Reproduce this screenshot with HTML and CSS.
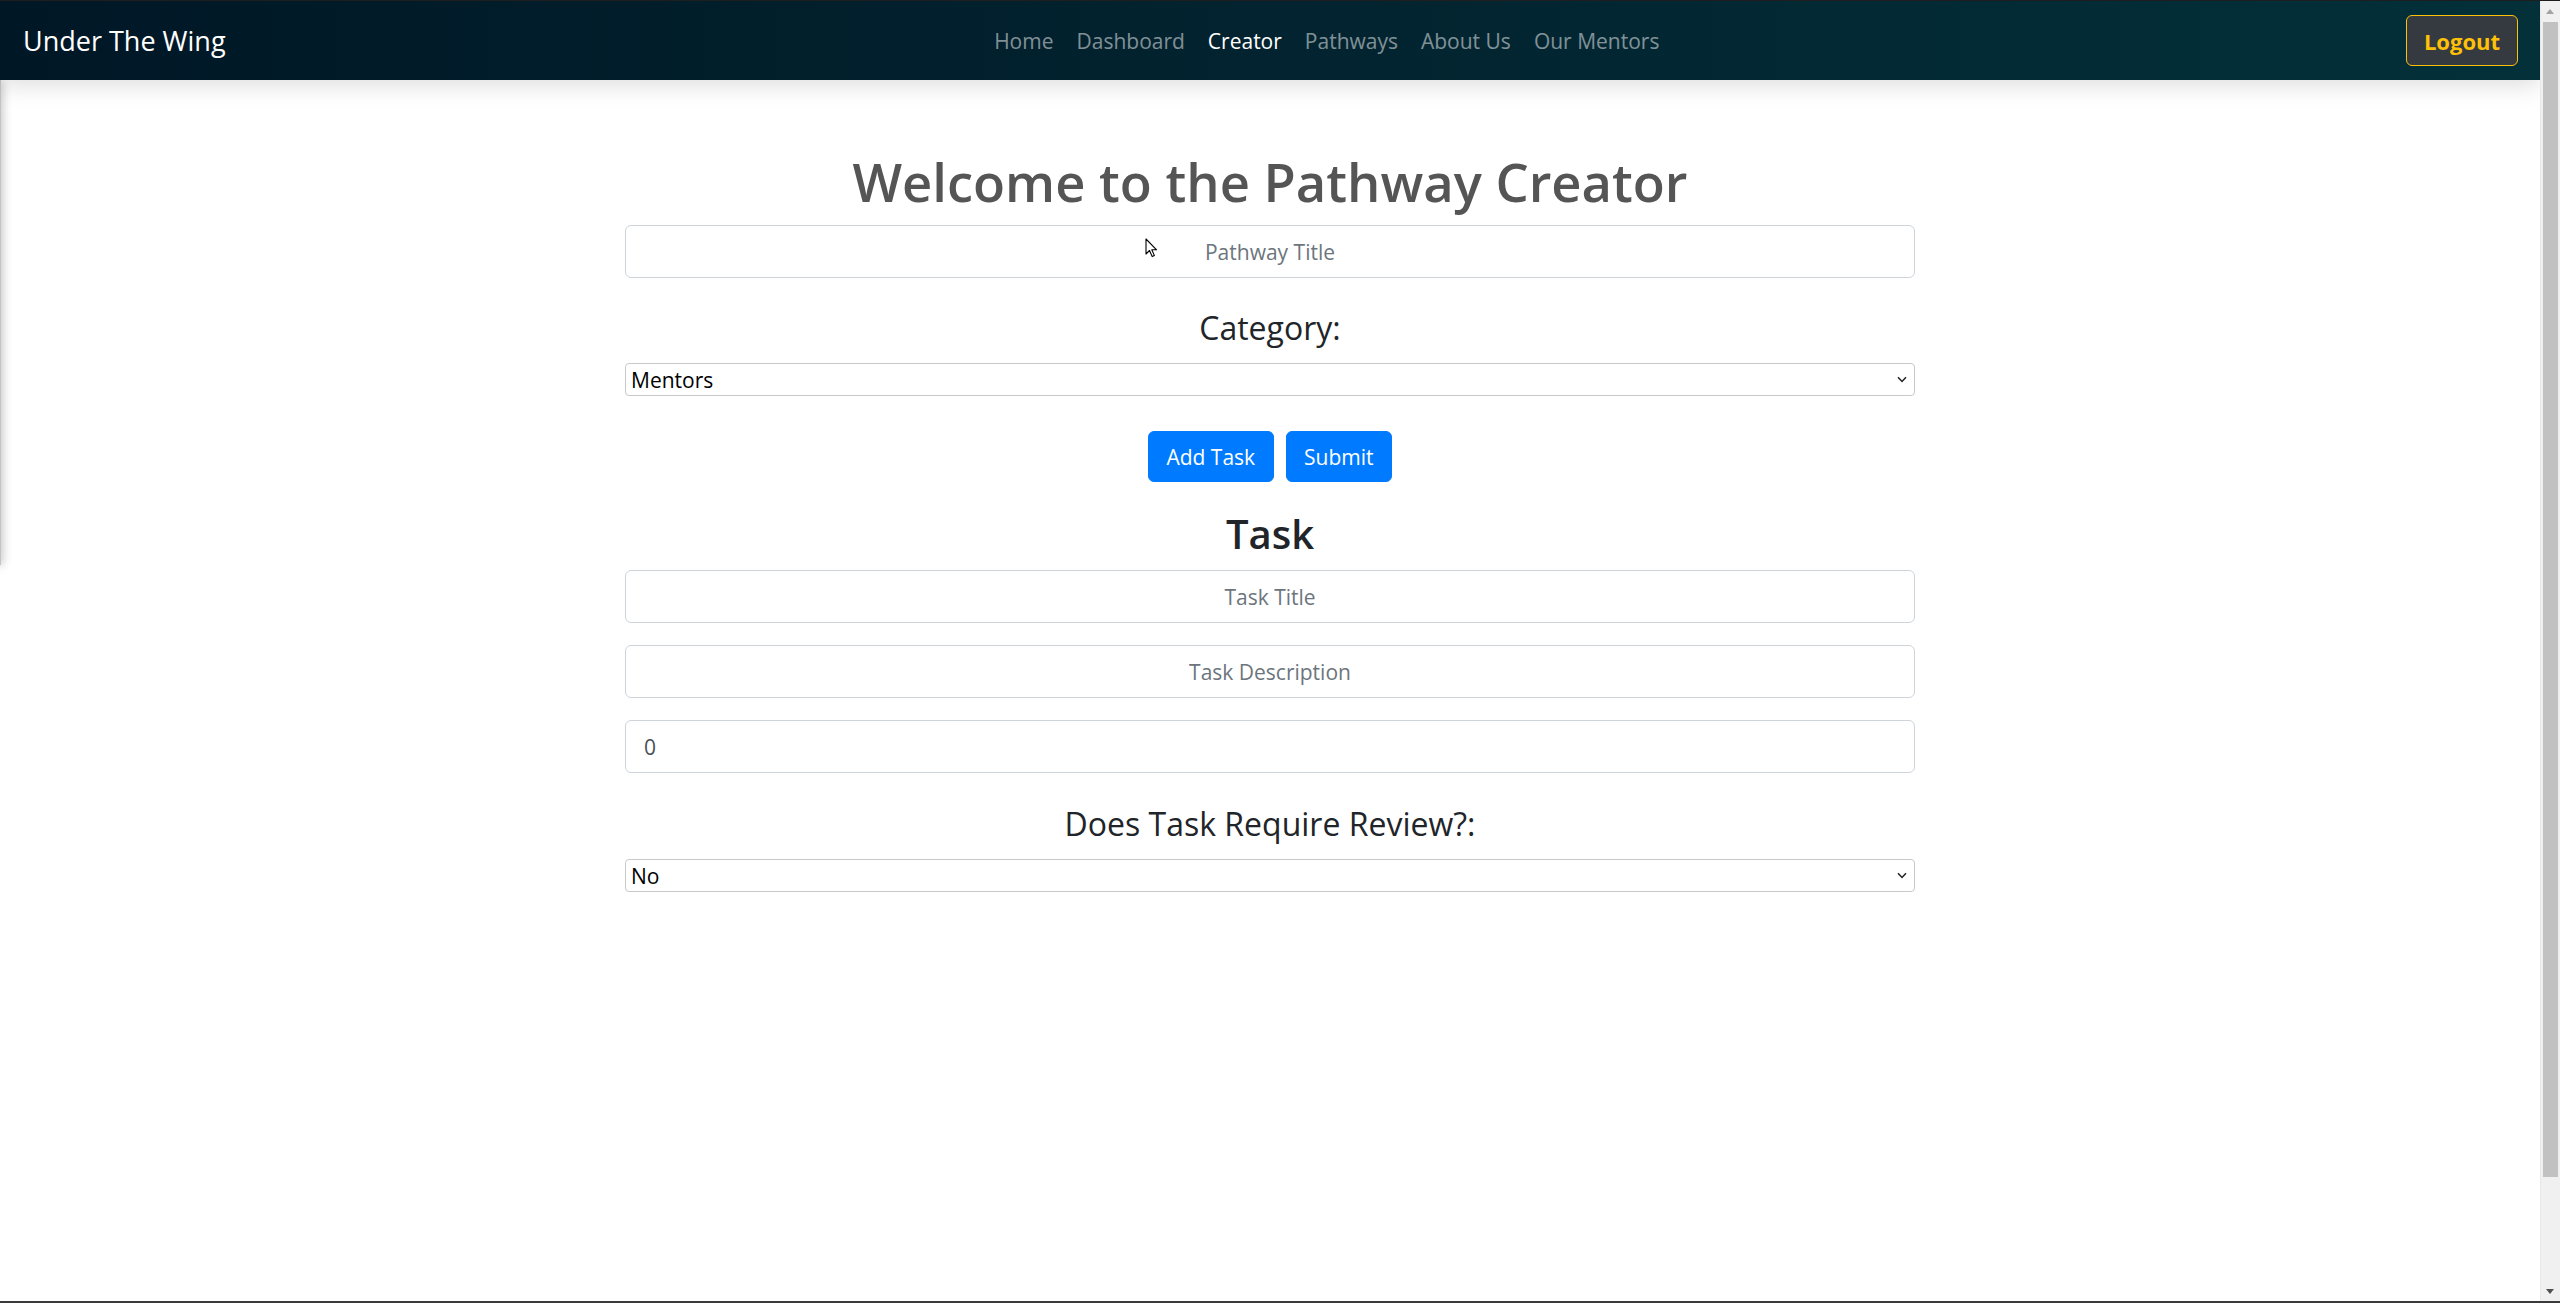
FILE: index.html
```html
<!DOCTYPE html>
<html lang="en">
<head>
<meta charset="utf-8">
<title>Under The Wing - Pathway Creator</title>
<link rel="stylesheet" href="styles.css">
</head>
<body>
<div class="window">
  <div class="viewport">
    <div class="page">
      <nav class="navbar">
        <a class="brand" href="#">Under The Wing</a>
        <ul class="nav-links">
          <li><a class="nav-link" href="#">Home</a></li>
          <li><a class="nav-link" href="#">Dashboard</a></li>
          <li><a class="nav-link active" href="#">Creator</a></li>
          <li><a class="nav-link" href="#">Pathways</a></li>
          <li><a class="nav-link" href="#">About Us</a></li>
          <li><a class="nav-link" href="#">Our Mentors</a></li>
        </ul>
        <button class="btn-logout" type="button">Logout</button>
      </nav>
      <div class="offcanvas"></div>
      <main class="creator">
        <h1 class="creator-title">Welcome to the Pathway Creator</h1>
        <div class="field">
          <input class="form-control" type="text" placeholder="Pathway Title">
          <svg class="cursor" width="13" height="20" viewBox="0 0 13 20"><path d="M1 1 L1 16 L4.5 12.5 L7.2 18.6 L9.4 17.6 L6.8 11.8 L11.6 11.8 Z" fill="#fff" stroke="#000" stroke-width="1.1" stroke-linejoin="round"/></svg>
        </div>
        <label class="field-label">Category:</label>
        <div class="select-wrap">
          <select class="plain-select"><option>Mentors</option></select>
          <svg class="chevron" width="10" height="7" viewBox="0 0 10 7"><path d="M1 1.2 L5 5.4 L9 1.2" fill="none" stroke="#222" stroke-width="1.5"/></svg>
        </div>
        <div class="actions">
          <button class="btn-primary" type="button">Add Task</button>
          <button class="btn-primary" type="button">Submit</button>
        </div>
        <h2 class="task-title">Task</h2>
        <input class="form-control task-input" type="text" placeholder="Task Title">
        <input class="form-control task-input" type="text" placeholder="Task Description">
        <input class="form-control task-input number" type="text" value="0">
        <label class="field-label review-label">Does Task Require Review?:</label>
        <div class="select-wrap">
          <select class="plain-select"><option>No</option></select>
          <svg class="chevron" width="10" height="7" viewBox="0 0 10 7"><path d="M1 1.2 L5 5.4 L9 1.2" fill="none" stroke="#222" stroke-width="1.5"/></svg>
        </div>
      </main>
    </div>
    <div class="scrollbar">
      <div class="sb-arrow up"></div>
      <div class="sb-track">
        <div class="sb-thumb"></div>
      </div>
      <div class="sb-arrow down"></div>
    </div>
  </div>
</div>
</body>
</html>
```

FILE: styles.css
```css
* { box-sizing: border-box; }

html, body {
  margin: 0;
  padding: 0;
  height: 1303px;
  overflow: hidden;
  background: #ffffff;
}

body {
  font-family: "Open Sans", "Noto Sans", sans-serif;
  color: #212529;
}

.window {
  height: 1303px;
  display: flex;
  flex-direction: column;
  border-top: 1px solid #1e1e1e;
  border-bottom: 2px solid #3a3a3a;
}

.viewport {
  flex: 1;
  display: flex;
  min-height: 0;
}

.page {
  flex: 1;
  position: relative;
  overflow: hidden;
  background: #fff;
}

/* ---------- navbar ---------- */
.navbar {
  position: relative;
  z-index: 2;
  height: 79px;
  display: flex;
  align-items: center;
  padding: 0 22px 0 23px;
  background: linear-gradient(90deg, #001726 0%, #02232f 50%, #033039 100%);
  box-shadow: 0 6px 22px rgba(0, 0, 0, 0.13);
}

.brand {
  color: #ffffff;
  text-decoration: none;
  font-size: 27px;
  line-height: 40px;
  margin-right: 22px;
  white-space: nowrap;
}

.nav-links {
  flex: 1;
  display: flex;
  justify-content: center;
  list-style: none;
  margin: 0;
  padding: 0;
}

.nav-link {
  display: block;
  padding: 0 11.5px;
  font-size: 21px;
  line-height: 40px;
  color: rgba(255, 255, 255, 0.5);
  text-decoration: none;
  white-space: nowrap;
}

.nav-link.active { color: #ffffff; }

.btn-logout {
  width: 112px;
  height: 51px;
  background: #343a40;
  border: 1.5px solid #ffc107;
  border-radius: 6px;
  color: #ffc107;
  font-family: inherit;
  font-size: 22px;
  font-weight: 700;
  padding: 0;
}

/* hidden offcanvas panel: only its shadow peeks in */
.offcanvas {
  position: absolute;
  top: 79px;
  left: -300px;
  width: 301px;
  height: 485px;
  background: #c4c4c4;
  box-shadow: 2px 0 9px rgba(0, 0, 0, 0.22);
  z-index: 1;
}

/* ---------- creator form ---------- */
.creator {
  width: 1290px;
  margin: 0 auto;
  text-align: center;
}

.creator-title {
  margin: 69px 0 10px;
  font-size: 52.5px;
  line-height: 66px;
  font-weight: 600;
  color: #555555;
}

.field { position: relative; }

.form-control {
  display: block;
  width: 100%;
  height: 53px;
  padding: 0 18px;
  border: 1px solid #ced4da;
  border-radius: 6px;
  font-family: inherit;
  font-size: 21px;
  color: #495057;
  text-align: center;
  background: #fff;
  outline: none;
}

.form-control::placeholder { color: #6c757d; }

.cursor {
  position: absolute;
  left: 520px;
  top: 13px;
}

.field-label {
  display: block;
  margin: 26px 0 11px;
  font-size: 32px;
  line-height: 48px;
  color: #212529;
}

.select-wrap { position: relative; }

.plain-select {
  display: block;
  width: 100%;
  height: 33px;
  -webkit-appearance: none;
  appearance: none;
  border: 1.5px solid #c9c9c9;
  border-radius: 4px;
  background: #fff;
  padding: 0 5px;
  font-family: inherit;
  font-size: 21px;
  color: #000;
  text-align: left;
}

.chevron {
  position: absolute;
  right: 8px;
  top: 13px;
}

.actions {
  margin-top: 35px;
  display: flex;
  justify-content: center;
  gap: 12px;
}

.btn-primary {
  height: 51px;
  padding: 0 17.5px;
  background: #007bff;
  border: 1px solid #007bff;
  border-radius: 6px;
  color: #fff;
  font-family: inherit;
  font-size: 21px;
}

.task-title {
  margin: 28px 0 12px;
  font-size: 40px;
  line-height: 48px;
  font-weight: 600;
  color: #212529;
}

.task-input { margin-bottom: 22px; }

.task-input.number {
  text-align: left;
  margin-bottom: 0;
}

.review-label { margin-top: 27px; }

/* ---------- scrollbar ---------- */
.scrollbar {
  width: 20px;
  display: flex;
  flex-direction: column;
  background: #f0f0f0;
  border-left: 1px solid #e8e8e8;
}

.sb-arrow {
  height: 20px;
  position: relative;
}

.sb-arrow::after {
  content: "";
  position: absolute;
  left: 5px;
  border-left: 4.5px solid transparent;
  border-right: 4.5px solid transparent;
}

.sb-arrow.up::after {
  top: 8px;
  border-bottom: 5px solid #a3a3a3;
}

.sb-arrow.down::after {
  top: 8px;
  border-top: 5px solid #505050;
}

.sb-track {
  flex: 1;
  padding: 1px 2px 0;
}

.sb-thumb {
  height: 1155px;
  background: #c1c1c1;
}
```
